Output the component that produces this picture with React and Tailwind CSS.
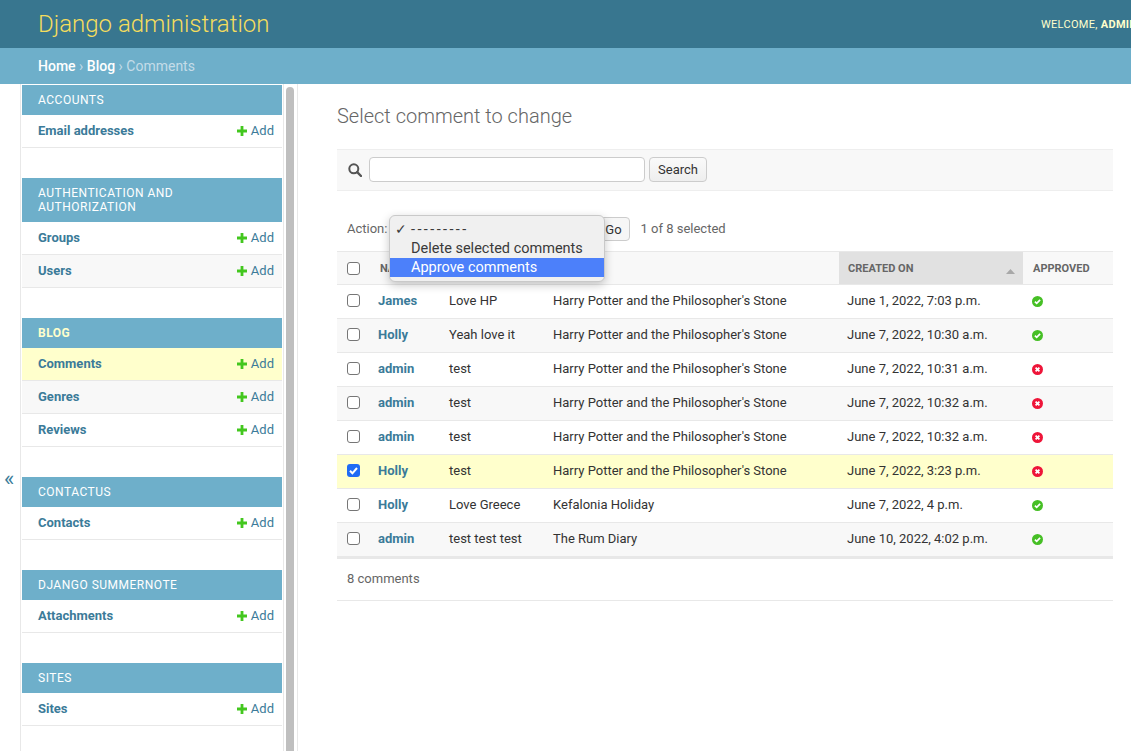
const sections = [
  { title: 'Accounts', models: ['Email addresses'] },
  { title: 'Authentication and Authorization', models: ['Groups', 'Users'] },
  { title: 'Blog', models: ['Comments', 'Genres', 'Reviews'], active: true },
  { title: 'Contactus', models: ['Contacts'] },
  { title: 'Django Summernote', models: ['Attachments'] },
  { title: 'Sites', models: ['Sites'] },
];

const potter = "Harry Potter and the Philosopher's Stone";

const comments = [
  { name: 'James', text: 'Love HP', post: potter, date: 'June 1, 2022, 7:03 p.m.', approved: true },
  { name: 'Holly', text: 'Yeah love it', post: potter, date: 'June 7, 2022, 10:30 a.m.', approved: true },
  { name: 'admin', text: 'test', post: potter, date: 'June 7, 2022, 10:31 a.m.', approved: false },
  { name: 'admin', text: 'test', post: potter, date: 'June 7, 2022, 10:32 a.m.', approved: false },
  { name: 'admin', text: 'test', post: potter, date: 'June 7, 2022, 10:32 a.m.', approved: false },
  { name: 'Holly', text: 'test', post: potter, date: 'June 7, 2022, 3:23 p.m.', approved: false, selected: true },
  { name: 'Holly', text: 'Love Greece', post: 'Kefalonia Holiday', date: 'June 7, 2022, 4 p.m.', approved: true },
  { name: 'admin', text: 'test test test', post: 'The Rum Diary', date: 'June 10, 2022, 4:02 p.m.', approved: true },
];

const PlusIcon = () => (
  <svg width="10" height="10" viewBox="0 0 10 10" className="shrink-0">
    <path d="M3.6 0h2.8v3.6H10v2.8H6.4V10H3.6V6.4H0V3.6h3.6z" fill="#43c71e" />
  </svg>
);

const StatusIcon = ({ approved }) => (
  <svg width="11" height="11" viewBox="0 0 11 11" className="block">
    <circle cx="5.5" cy="5.5" r="5.5" fill={approved ? '#46bf25' : '#ee1539'} />
    {approved ? (
      <path d="M2.9 5.6l1.8 1.8 3.4-3.5" fill="none" stroke="#fff" strokeWidth="1.7" />
    ) : (
      <path d="M3.6 3.6l3.8 3.8M7.4 3.6L3.6 7.4" fill="none" stroke="#fff" strokeWidth="1.8" />
    )}
  </svg>
);

const Checkbox = ({ checked }) =>
  checked ? (
    <span className="flex h-[13px] w-[13px] items-center justify-center rounded-[3px] bg-[#1f6bf5]">
      <svg width="11" height="11" viewBox="0 0 11 11">
        <path d="M2 5.8l2.4 2.5L9 3" fill="none" stroke="#fff" strokeWidth="2" />
      </svg>
    </span>
  ) : (
    <span className="block h-[13px] w-[13px] rounded-[3px] border border-[#767676] bg-white" />
  );

const Sidebar = () => (
  <div className="flex w-[261px] shrink-0 flex-col gap-[30px] pl-[1px] pt-px">
    {sections.map(section => (
      <div key={section.title}>
        <div
          className={`bg-[#6eafca] py-2 pl-4 pr-[60px] text-[12px] leading-[14px] tracking-[0.5px] uppercase ${
            section.active ? 'font-bold text-[#ffffcc]' : 'text-white'
          }`}
        >
          {section.title}
        </div>
        {section.models.map((model, i) => (
          <div
            key={model}
            className={`flex h-[33px] items-center justify-between border-b border-[#e8e8e8] pl-4 pr-2 text-[13px] ${
              section.active && i === 0 ? 'bg-[#ffffcc]' : i % 2 === 1 ? 'bg-[#f8f8f8]' : 'bg-white'
            }`}
          >
            <span className="font-bold text-[#3b7b99]">{model}</span>
            <span className="flex items-center gap-[4px] text-[#3b7b99]">
              <PlusIcon />
              Add
            </span>
          </div>
        ))}
      </div>
    ))}
  </div>
);

const ActionMenu = () => (
  <div className="absolute left-[52px] top-[-2px] z-10 h-[67px] w-[216px] rounded-md border border-[#c9c9c9] bg-[#f0f0f0] pt-[4px] text-[14.5px] leading-[19px] text-[#3a3a3a] shadow-[0_3px_10px_rgba(0,0,0,0.22)]">
    <div className="relative pl-[21px]">
      <span className="absolute left-[5px] top-0 text-[14px]">✓</span>
      <span className="tracking-[2.4px]">---------</span>
    </div>
    <div className="pl-[21px]">Delete selected comments</div>
    <div className="bg-[#4c80fa] pl-[21px] text-white">Approve comments</div>
  </div>
);

const App = () => {
  return (
    <div className="h-[751px] w-[1131px] overflow-hidden bg-white font-['Roboto',sans-serif] text-[13px] text-[#333]">
      {/* Header */}
      <header className="flex h-12 items-center justify-between bg-[#38768f] pl-[38px]">
        <h1 className="text-[24px] font-light text-[#f5dd5d]">Django administration</h1>
        <div className="w-[90px] whitespace-nowrap pt-[2px] text-[11px] tracking-[0.3px] text-[#ffffcc]">
          WELCOME, <strong>ADMIN</strong>
        </div>
      </header>

      {/* Breadcrumbs */}
      <div className="flex h-9 items-center bg-[#6eafca] pl-[38px] text-[14px] text-white">
        <span className="font-medium">Home</span>
        <span className="mx-[3.5px] text-[#c4dce8]">›</span>
        <span className="font-medium">Blog</span>
        <span className="mx-[3.5px] text-[#c4dce8]">›</span>
        <span className="text-[#c4dce8]">Comments</span>
      </div>

      <div className="flex h-[667px]">
        {/* Sidebar toggle */}
        <div className="w-[21px] shrink-0 border-r border-[#e8e8e8] pl-[4px] pt-[381px] text-[22px] leading-[28px] text-[#3b7b99]">
          «
        </div>
        <Sidebar />
        <div className="ml-[1px] w-[15px] shrink-0 border-l border-r border-[#e8e8e8] pl-[2px] pt-[3px]">
          <div className="h-full w-2 rounded-t bg-[#bfbfbf]" />
        </div>

        {/* Main Content */}
        <main className="min-w-0 flex-1 pl-[39px] pr-[18px]">
          <h2 className="mb-5 mt-[19px] text-[20px] font-light leading-[26px] text-[#666]">
            Select comment to change
          </h2>

          <div className="flex h-[42px] items-center border-y border-[#eee] bg-[#f8f8f8] pb-px pl-[11px]">
            <svg width="14" height="14" viewBox="0 0 14 14" className="mr-[7px]">
              <circle cx="5.8" cy="5.8" r="4.5" fill="none" stroke="#555" strokeWidth="2" />
              <path d="M9.2 9.2L13 13" stroke="#555" strokeWidth="2.4" strokeLinecap="round" />
            </svg>
            <div className="h-[25px] w-[276px] rounded border border-[#ccc] bg-white" />
            <button className="ml-1 h-[25px] w-[58px] rounded border border-[#ccc] bg-gradient-to-b from-[#fafafa] to-[#eeeeee] text-[13px] text-[#333]">
              Search
            </button>
          </div>

          <div className="relative mt-[26px] flex h-[24px] items-center pl-[10px] text-[#666]">
            <span>Action:</span>
            <ActionMenu />
            <button className="ml-[209px] h-[24px] w-[34px] rounded-r border border-[#ccc] bg-[#f6f6f6] pt-px text-[#333]">Go</button>
            <span className="ml-[10px]">1 of 8 selected</span>
          </div>

          <table className="mt-[10px] w-[776px] table-fixed border-collapse">
            <colgroup>
              <col className="w-[33px]" />
              <col className="w-[71px]" />
              <col className="w-[104px]" />
              <col className="w-[294px]" />
              <col className="w-[184px]" />
              <col className="w-[90px]" />
            </colgroup>
            <thead>
              <tr className="h-[33px] border-y border-[#e8e8e8] bg-[#f8f8f8] text-left text-[11px] text-[#666]">
                <th className="pl-[10px]">
                  <Checkbox />
                </th>
                <th className="pl-[10px] pt-[2px] font-bold">NAME</th>
                <th className="pl-2 pt-[2px] font-bold">COMMENT</th>
                <th className="pl-2 pt-[2px] font-bold">POST</th>
                <th className="bg-[#e1e1e1] pl-[9px] pt-[2px] font-bold">
                  <div className="flex items-center justify-between pr-2">
                    CREATED ON
                    <svg width="9" height="5" viewBox="0 0 9 5" className="mt-1">
                      <path d="M4.5 0L9 5H0z" fill="#a8a8a8" />
                    </svg>
                  </div>
                </th>
                <th className="pl-[10px] pt-[2px] font-bold">APPROVED</th>
              </tr>
            </thead>
            <tbody>
              {comments.map((c, i) => (
                <tr
                  key={i}
                  className={`h-[34px] border-b border-[#e8e8e8] ${
                    c.selected ? 'bg-[#ffffcc]' : i % 2 === 1 ? 'bg-[#f8f8f8]' : 'bg-white'
                  }`}
                >
                  <td className="pb-[2px] pl-[10px]">
                    <Checkbox checked={c.selected} />
                  </td>
                  <td className="pb-px pl-2 font-bold text-[#3b7b99]">{c.name}</td>
                  <td className="pb-px pl-2">{c.text}</td>
                  <td className="pb-px pl-2">{c.post}</td>
                  <td className="pb-px pl-2">{c.date}</td>
                  <td className="pl-[9px]">
                    <StatusIcon approved={c.approved} />
                  </td>
                </tr>
              ))}
            </tbody>
          </table>

          <div className="flex h-[44px] items-center border-b border-t-2 border-[#e8e8e8] pb-[2px] pl-[10px] text-[#666]">8 comments</div>
        </main>
      </div>
    </div>
  );
};

export default App;
